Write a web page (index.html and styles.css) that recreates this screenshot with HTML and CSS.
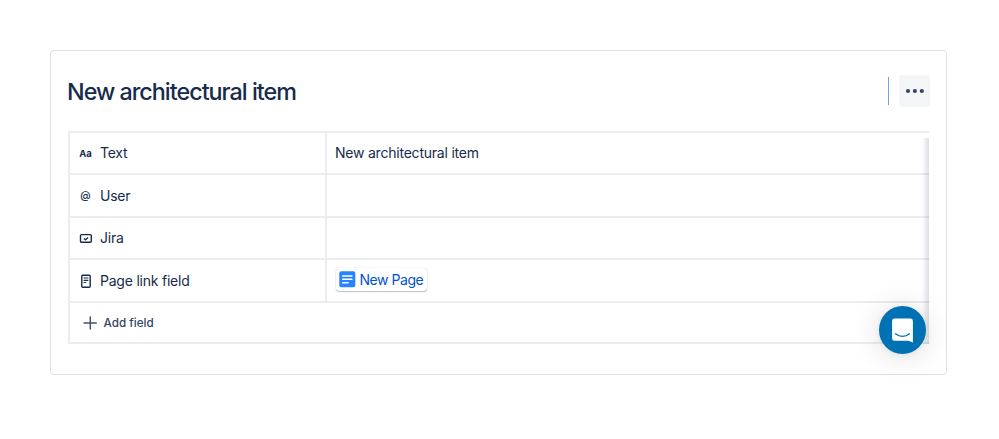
FILE: index.html
```html
<!DOCTYPE html>
<html lang="en">
<head>
<meta charset="utf-8">
<title>New architectural item</title>
<link rel="stylesheet" href="styles.css">
</head>

<body>

    <div class="card">

        <div class="header">
            <h1>New architectural item</h1>

            <div class="actions">
                <div class="divider"></div>
                <button class="more" aria-label="More">
                    <svg width="20" height="6" viewBox="0 0 20 6" fill="#344563">
                        <circle cx="3" cy="3" r="2.1"/>
                        <circle cx="9.9" cy="3" r="2.1"/>
                        <circle cx="16.8" cy="3" r="2.1"/>
                    </svg>
                </button>
            </div>
        </div>

        <div class="fields">

            <div class="row">
                <div class="label"><span class="icon aa">Aa</span><span class="name">Text</span></div>
                <div class="value"><span class="text">New architectural item</span></div>
            </div>

            <div class="row">
                <div class="label"><span class="icon at">@</span><span class="name">User</span></div>
                <div class="value"></div>
            </div>

            <div class="row">
                <div class="label">
                    <span class="icon">
                        <svg width="14" height="14" viewBox="0 0 14 14" fill="none" stroke="#172b4d" stroke-width="1.4">
                            <rect x="1.5" y="3.6" width="10.8" height="7.6" rx="1"/>
                            <path d="M5 7.4l1.4 1.3L9 6.5"/>
                        </svg>
                    </span>
                    <span class="name">Jira</span>
                </div>
                <div class="value"></div>
            </div>

            <div class="row">
                <div class="label">
                    <span class="icon">
                        <svg width="14" height="14" viewBox="0 0 14 14" fill="none" stroke="#172b4d" stroke-width="1.4">
                            <rect x="2.8" y="1.2" width="8.4" height="12.1" rx="1"/>
                            <path d="M4.6 4h4.8M4.6 6.3h4.8M4.6 8.5h2.6" stroke-width="1.2"/>
                        </svg>
                    </span>
                    <span class="name">Page link field</span>
                </div>
                <div class="value">
                    <a class="pagelink">
                        <svg width="17" height="17" viewBox="0 0 17 17">
                            <rect x="0.3" y="0.3" width="16" height="16" rx="2" fill="#2684ff"/>
                            <path d="M3.7 5h9.2M3.7 8.3h9.2M3.7 11.7h5.4" stroke="#fff" stroke-width="1.6" stroke-linecap="round"/>
                        </svg>
                        <span class="linktext">New Page</span>
                    </a>
                </div>
            </div>

            <div class="row addrow">
                <svg width="14" height="14" viewBox="0 0 14 14" stroke="#42526e" stroke-width="1.5" stroke-linecap="round">
                    <path d="M7.3 0.9v12.2M1.1 7h12.2"/>
                </svg>
                <span class="addtext">Add field</span>
            </div>

            <div class="scrollshadow"></div>
        </div>

    </div>

    <div class="chat">
        <svg width="22" height="25" viewBox="0 0 22 25">
            <path d="M2.5 0.5h16a2.4 2.4 0 0 1 2.4 2.4v21.6l-4.4-1.7h-14A2.4 2.4 0 0 1 0.1 20.4V2.9A2.4 2.4 0 0 1 2.5 0.5z" fill="#fff"/>
            <path d="M3.5 15.8c4.2 3.2 9.8 3.2 14 0" fill="none" stroke="#0071b2" stroke-width="1.4" stroke-linecap="round"/>
        </svg>
    </div>

</body>
</html>
```
FILE: styles.css
```css
* {
    box-sizing: border-box;
}

body {
    margin: 0;
    padding: 50px;
    background: #fff;
    color: #172b4d;
    font-family: Inter, "Liberation Sans", sans-serif;
    overflow: hidden;
}

.card {
    width: 897px;
    height: 325px;
    padding: 24px 16px 0 16px;
    border: 1px solid #dfe1e6;
    border-radius: 4px;
}

.header {
    display: flex;
    justify-content: space-between;
    align-items: center;
    height: 32px;
}

h1 {
    margin: 0;
    padding-top: 1px;
    font-size: 23.3px;
    font-weight: 550;
    letter-spacing: -0.98px;
    line-height: 32px;
    white-space: nowrap;
}

.actions {
    display: flex;
    align-items: center;
    gap: 10px;
}

.divider {
    width: 1px;
    height: 28px;
    background: #6f9fe8;
}

.more {
    display: flex;
    align-items: center;
    justify-content: center;
    width: 31px;
    height: 32px;
    padding: 0;
    border: 0;
    border-radius: 3px;
    background: #f4f5f7;
}

.fields {
    position: relative;
    margin: 23.8px 1px 0 1px;
    border-left: 2px solid #ebecf0;
    border-bottom: 2px solid #ebecf0;
}

.row {
    display: flex;
    height: 42.5px;
    border-top: 2px solid #ebecf0;
}

.label {
    display: flex;
    align-items: center;
    width: 257px;
    padding-left: 8.5px;
    border-right: 2px solid #ebecf0;
}

.icon {
    display: flex;
    align-items: center;
    justify-content: center;
    width: 14px;
    height: 14px;
    margin-right: 7.5px;
}

.aa {
    font-size: 9.5px;
    font-weight: 700;
}

.at {
    font-size: 10.5px;
    font-weight: 500;
}

.name,
.text {
    font-size: 14px;
    letter-spacing: -0.22px;
    line-height: 20px;
    white-space: nowrap;
}

.value {
    display: flex;
    align-items: center;
    flex: 1;
    padding-left: 8px;
}

.pagelink {
    display: flex;
    align-items: center;
    gap: 3.5px;
    height: 23px;
    padding: 0 4px 0 3px;
    margin: 0 0 2px 1px;
    border-radius: 3px;
    box-shadow: 0 1px 1px rgba(9, 30, 66, 0.25), 0 0 1px rgba(9, 30, 66, 0.31);
    color: #0052cc;
}

.linktext {
    font-size: 14px;
    letter-spacing: -0.45px;
    white-space: nowrap;
}

.addrow {
    align-items: center;
    height: 41.5px;
    padding-left: 13px;
    gap: 6.5px;
}

.addtext {
    color: #344563;
    font-size: 11.7px;
    font-weight: 500;
}

/* fade on the right edge of the scrollable table */
.scrollshadow {
    position: absolute;
    top: 7px;
    right: 0;
    bottom: -2px;
    width: 7px;
    background: linear-gradient(to right, rgba(9, 30, 66, 0), rgba(9, 30, 66, 0.14));
}

.chat {
    position: absolute;
    left: 879px;
    top: 306px;
    display: flex;
    align-items: center;
    justify-content: center;
    width: 47px;
    height: 48px;
    border-radius: 50%;
    background: #0071b2;
    box-shadow: 0 1px 6px rgba(0, 0, 0, 0.06), 0 2px 30px rgba(0, 0, 0, 0.14);
}
```
